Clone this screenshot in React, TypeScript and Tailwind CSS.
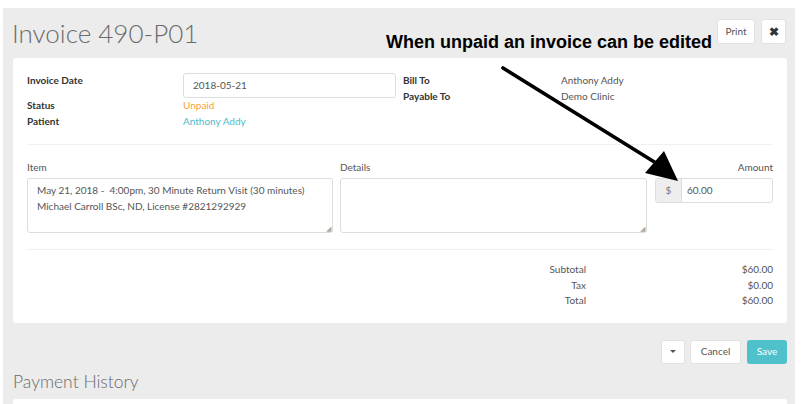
import React from 'react';

const font = { fontFamily: 'Lato, "Open Sans", sans-serif' };

function Arrow() {
  // annotation arrow pointing at the amount field
  return (
    <svg className="absolute left-0 top-0 pointer-events-none" width="807" height="404">
      <line x1="503" y1="68" x2="656" y2="163" stroke="#000" strokeWidth="3.6" strokeLinecap="round" />
      <polygon points="678,181 664,151 645,173" fill="#000" />
    </svg>
  );
}

export default function App() {
  return (
    <div className="relative w-[807px] h-[404px] overflow-hidden bg-white pt-[8px] pl-[3px] pr-[12px]" style={font}>
      <div className="h-full bg-[#ececec] pl-[10px] pr-[8px]">
        {/* header */}
        <div className="flex items-start justify-between h-[50px]">
          <h1 className="mt-[10px] -ml-px text-[26px] leading-[30px] font-light text-[#6b6b6b]">Invoice 490-P01</h1>
          <div className="flex gap-[6px] mt-[11px] mr-px">
            <button className="h-[25px] w-[38px] bg-white rounded-[3px] border border-[#e2e2e2] text-[10px] text-[#555]">Print</button>
            <button className="h-[25px] w-[25px] bg-white rounded-[3px] border border-[#e2e2e2] text-[12px] font-bold text-[#333] flex items-center justify-center">✖</button>
          </div>
        </div>

        {/* invoice card */}
        <div className="bg-white rounded-[3px] px-[14px] pt-[15px] pb-[14px] text-[10px] text-[#555]">
          <div className="flex">
            <div className="w-[369px]">
              <div className="flex">
                <div className="w-[156px] leading-[14px] font-bold text-[#333]">Invoice Date</div>
                <div className="flex-1 h-[25px] border border-[#ddd] rounded-[3px] px-[9px] flex items-center text-[#555]">2018-05-21</div>
              </div>
              <div className="flex -mt-px leading-[16px]">
                <div className="w-[156px] font-bold text-[#333]">Status</div>
                <div className="text-[#f3a43b]">Unpaid</div>
              </div>
              <div className="flex leading-[16px]">
                <div className="w-[156px] font-bold text-[#333]">Patient</div>
                <div className="text-[#4cbccb]">Anthony Addy</div>
              </div>
            </div>
            <div className="ml-[7px] -mt-px">
              <div className="flex leading-[16px]">
                <div className="w-[158px] font-bold text-[#333]">Bill To</div>
                <div>Anthony Addy</div>
              </div>
              <div className="flex leading-[16px]">
                <div className="w-[158px] font-bold text-[#333]">Payable To</div>
                <div>Demo Clinic</div>
              </div>
            </div>
          </div>

          <div className="mt-[15px] border-t border-[#f0f0f0]" />

          <div className="flex gap-[7px] pt-[15px]">
            <div className="w-[306px]">
              <div className="leading-[14px] mb-[4px]">Item</div>
              <div className="relative h-[55px] border border-[#ddd] rounded-[3px] px-[9px] pt-[3px] leading-[16px] text-[#555]">
                <div>May 21, 2018 -&nbsp; 4:00pm, 30 Minute Return Visit (30 minutes)</div>
                <div>Michael Carroll BSc, ND, License #2821292929</div>
                <span className="absolute right-[1px] bottom-0 text-[7px] leading-[7px] text-[#aaa]">◢</span>
              </div>
            </div>
            <div className="w-[307px]">
              <div className="leading-[14px] mb-[4px]">Details</div>
              <div className="relative h-[55px] border border-[#ddd] rounded-[3px]">
                <span className="absolute right-[1px] bottom-0 text-[7px] leading-[7px] text-[#aaa]">◢</span>
              </div>
            </div>
            <div className="flex-1 ml-px">
              <div className="leading-[14px] mb-[4px] text-right">Amount</div>
              <div className="flex h-[25px] border border-[#ddd] rounded-[3px] overflow-hidden">
                <div className="w-[26px] bg-[#eee] border-r border-[#ddd] flex items-center justify-center text-[#777]">$</div>
                <div className="flex-1 flex items-center pl-[5px] text-[#555]">60.00</div>
              </div>
            </div>
          </div>

          <div className="mt-[16px] border-t border-[#f0f0f0]" />

          <div className="pt-[12px] grid grid-cols-[1fr_187px] leading-[15.5px]">
            <div className="text-right">Subtotal</div>
            <div className="text-right">$60.00</div>
            <div className="text-right">Tax</div>
            <div className="text-right">$0.00</div>
            <div className="text-right">Total</div>
            <div className="text-right">$60.00</div>
          </div>
        </div>

        {/* actions */}
        <div className="flex justify-end gap-[5px] mt-[17px] text-[10px]">
          <button className="h-[24px] w-[24px] bg-white rounded-[3px] border border-[#e2e2e2] flex items-center justify-center">
            <span className="block w-0 h-0 border-l-[3px] border-r-[3px] border-t-[3px] border-l-transparent border-r-transparent border-t-[#555]" />
          </button>
          <button className="h-[24px] w-[51px] bg-white rounded-[3px] border border-[#e2e2e2] text-[#555]">Cancel</button>
          <button className="ml-px h-[24px] w-[40px] bg-[#4fc1ca] rounded-[3px] text-white">Save</button>
        </div>

        <div className="mt-[8px] text-[17.5px] leading-[20px] text-[#6b6b6b] font-light">Payment History</div>
        <div className="mt-[7px] h-[40px] bg-white rounded-[3px]" />
      </div>

      <div
        className="absolute left-[386px] top-[32px] text-[18px] leading-[20px] font-bold text-black whitespace-nowrap"
        style={{ fontFamily: '"Liberation Sans", Arial, sans-serif' }}
      >
        When unpaid an invoice can be edited
      </div>
      <Arrow />
    </div>
  );
}
